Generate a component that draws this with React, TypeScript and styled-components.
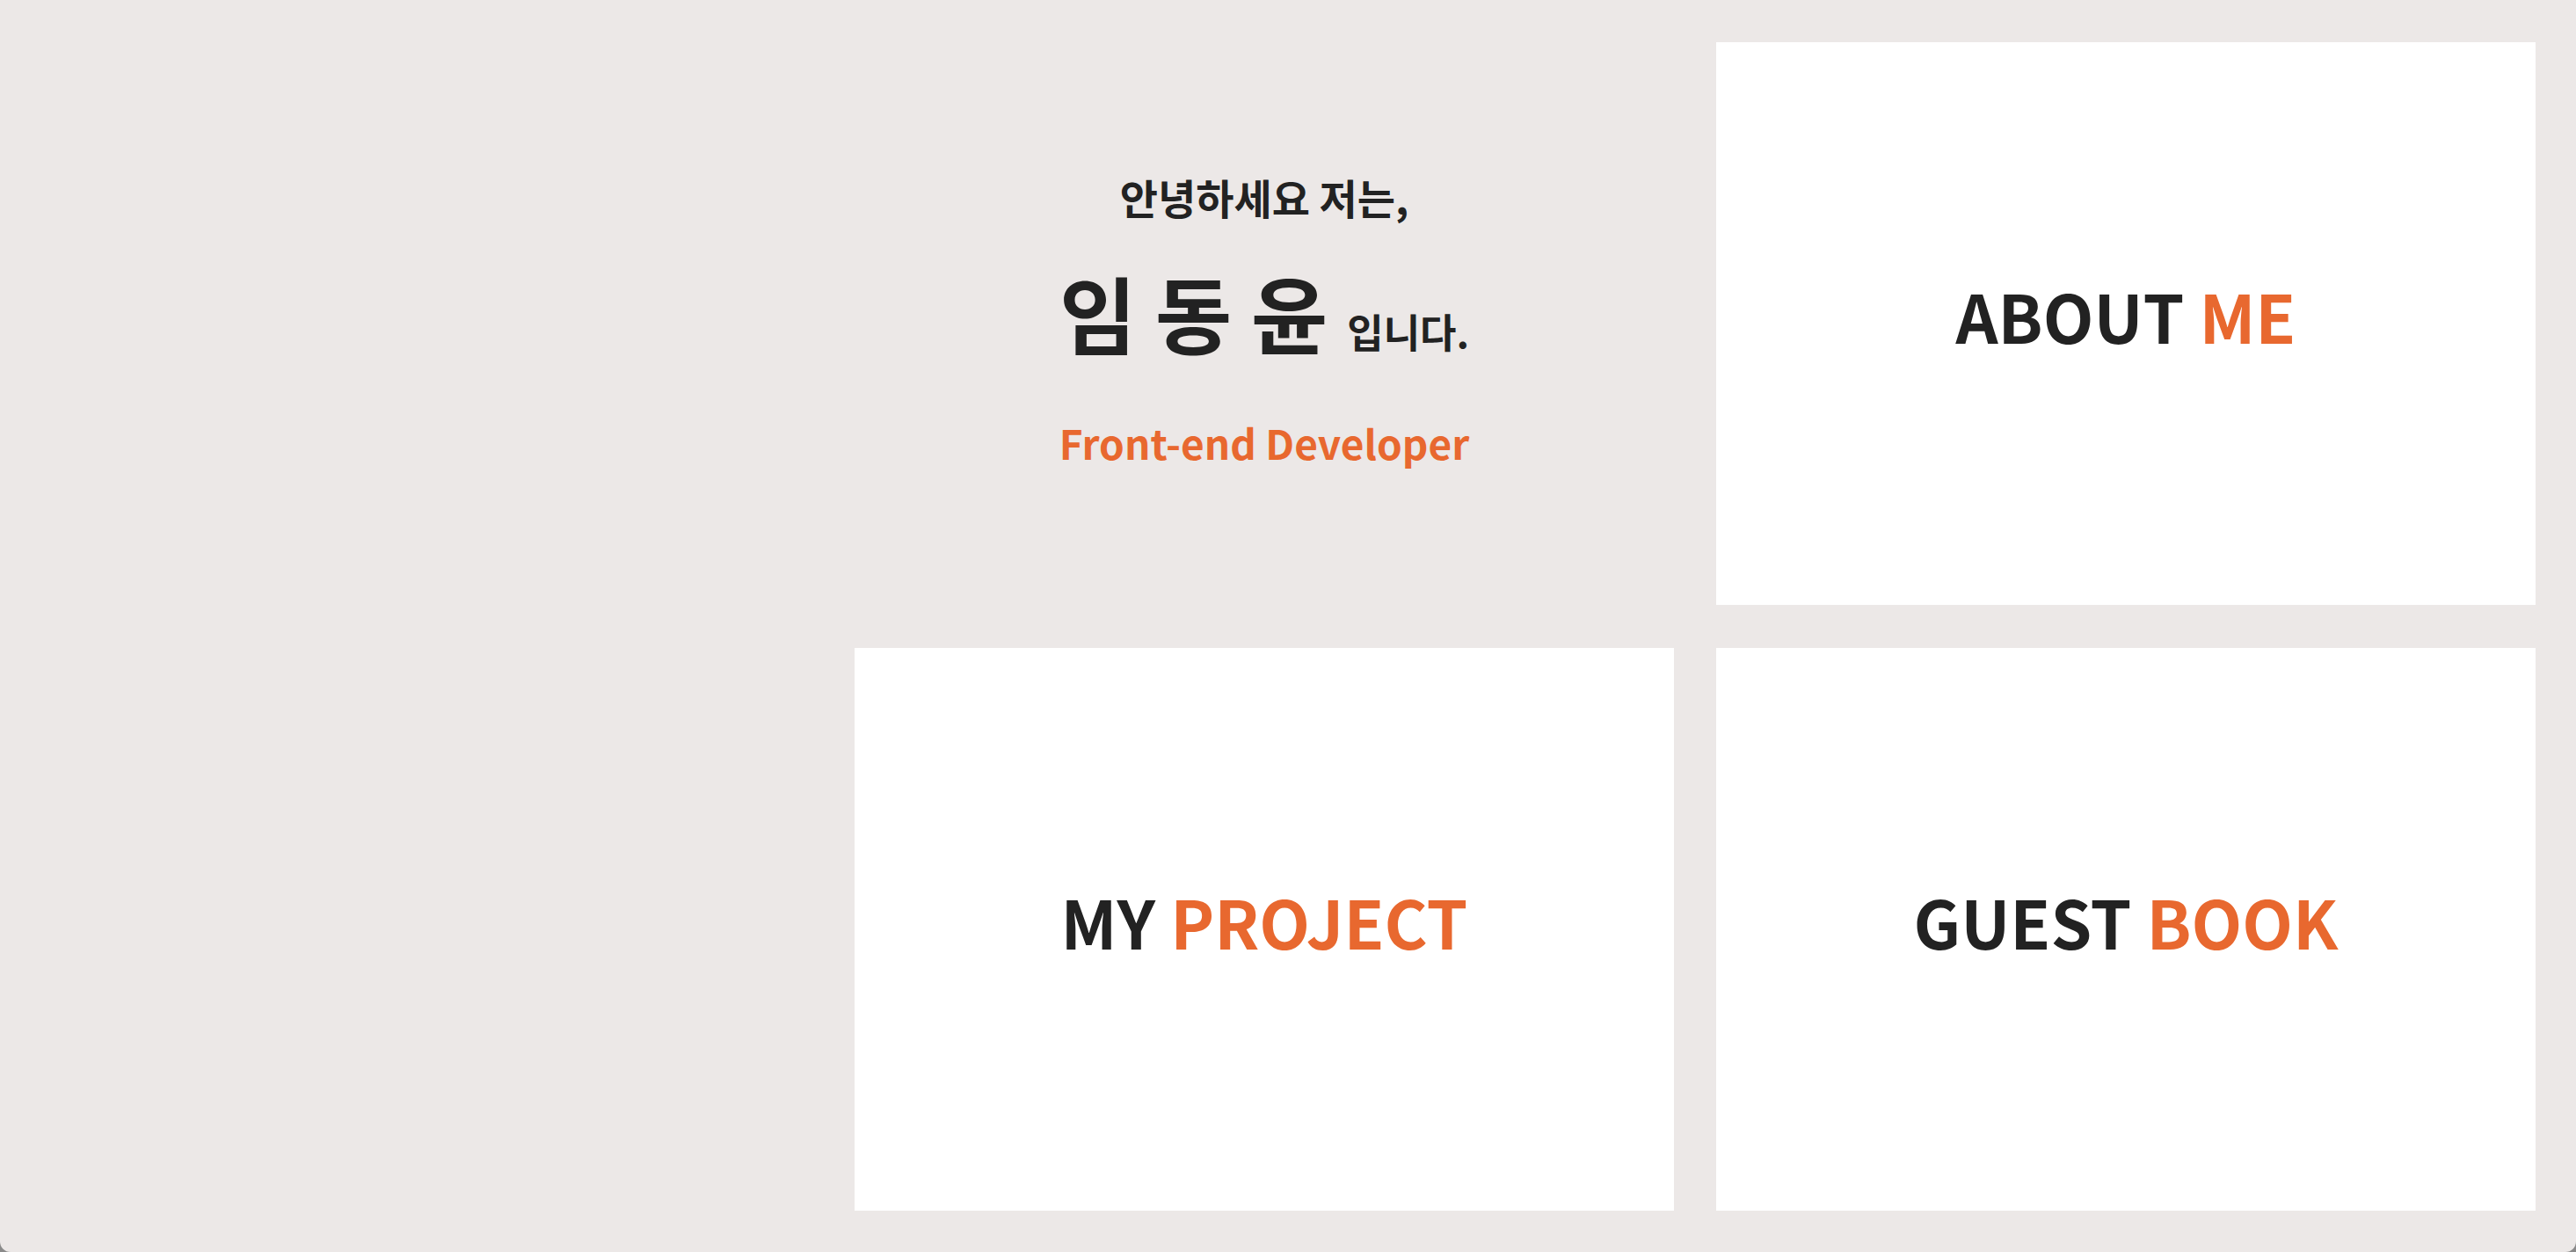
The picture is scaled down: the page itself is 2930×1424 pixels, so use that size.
import React from "react";
import styled, { createGlobalStyle } from "styled-components";

const GlobalStyle = createGlobalStyle`
  html, body {
    margin: 0;
    padding: 0;
    background: #8a8a8a;
  }
  body {
    font-family: "Noto Sans CJK KR", "Noto Sans", sans-serif;
  }
  #root {
    min-height: 100vh;
  }
`;

const Page = styled.main`
  box-sizing: border-box;
  width: 2930px;
  height: 1424px;
  background: #ece8e7;
  border-radius: 0 0 12px 12px;
  padding: 48px 46px 47px 0;
  display: grid;
  grid-template-columns: 1fr 932px 932px;
  grid-template-rows: 640px 640px;
  column-gap: 48px;
  row-gap: 49px;
  grid-template-areas:
    "empty intro about"
    "empty project guest";
`;

const Intro = styled.section`
  grid-area: intro;
  box-sizing: border-box;
  padding-bottom: 8px;
  display: flex;
  flex-direction: column;
  align-items: center;
  justify-content: center;
  color: #222222;
  font-family: "Noto Sans CJK KR", sans-serif;
`;

const Greeting = styled.p`
  margin: 0;
  font-size: 47px;
  font-weight: 700;
  line-height: 1.2;
`;

const NameLine = styled.h1`
  margin: 50px 0 0;
  display: flex;
  align-items: baseline;
  gap: 22px;
  font-weight: 700;
  line-height: 1.1;
`;

const Name = styled.span`
  font-size: 95px;
`;

const Suffix = styled.span`
  font-size: 45px;
`;

const Role = styled.p`
  margin: 69px 0 0;
  font-size: 46px;
  font-weight: 600;
  color: #e8682f;
  line-height: 1.2;
`;

const Card = styled.a<{ $area: string }>`
  grid-area: ${(p) => p.$area};
  box-sizing: border-box;
  background: #ffffff;
  display: flex;
  align-items: center;
  justify-content: center;
  padding-bottom: 20px;
  text-decoration: none;
  color: #222222;
  font-family: "Noto Sans CJK KR", sans-serif;
  font-size: 75px;
  font-weight: 700;
  line-height: 1;
`;

const Accent = styled.span`
  color: #e8682f;
`;

export default function App() {
  return (
    <>
      <GlobalStyle />
      <Page>
        <Intro>
          <Greeting>안녕하세요 저는,</Greeting>
          <NameLine>
            <Name>임 동 윤</Name>
            <Suffix>입니다.</Suffix>
          </NameLine>
          <Role>Front-end Developer</Role>
        </Intro>
        <Card $area="about" href="#about">
          ABOUT&nbsp;<Accent>ME</Accent>
        </Card>
        <Card $area="project" href="#project">
          MY&nbsp;<Accent>PROJECT</Accent>
        </Card>
        <Card $area="guest" href="#guest">
          GUEST&nbsp;<Accent>BOOK</Accent>
        </Card>
      </Page>
    </>
  );
}
